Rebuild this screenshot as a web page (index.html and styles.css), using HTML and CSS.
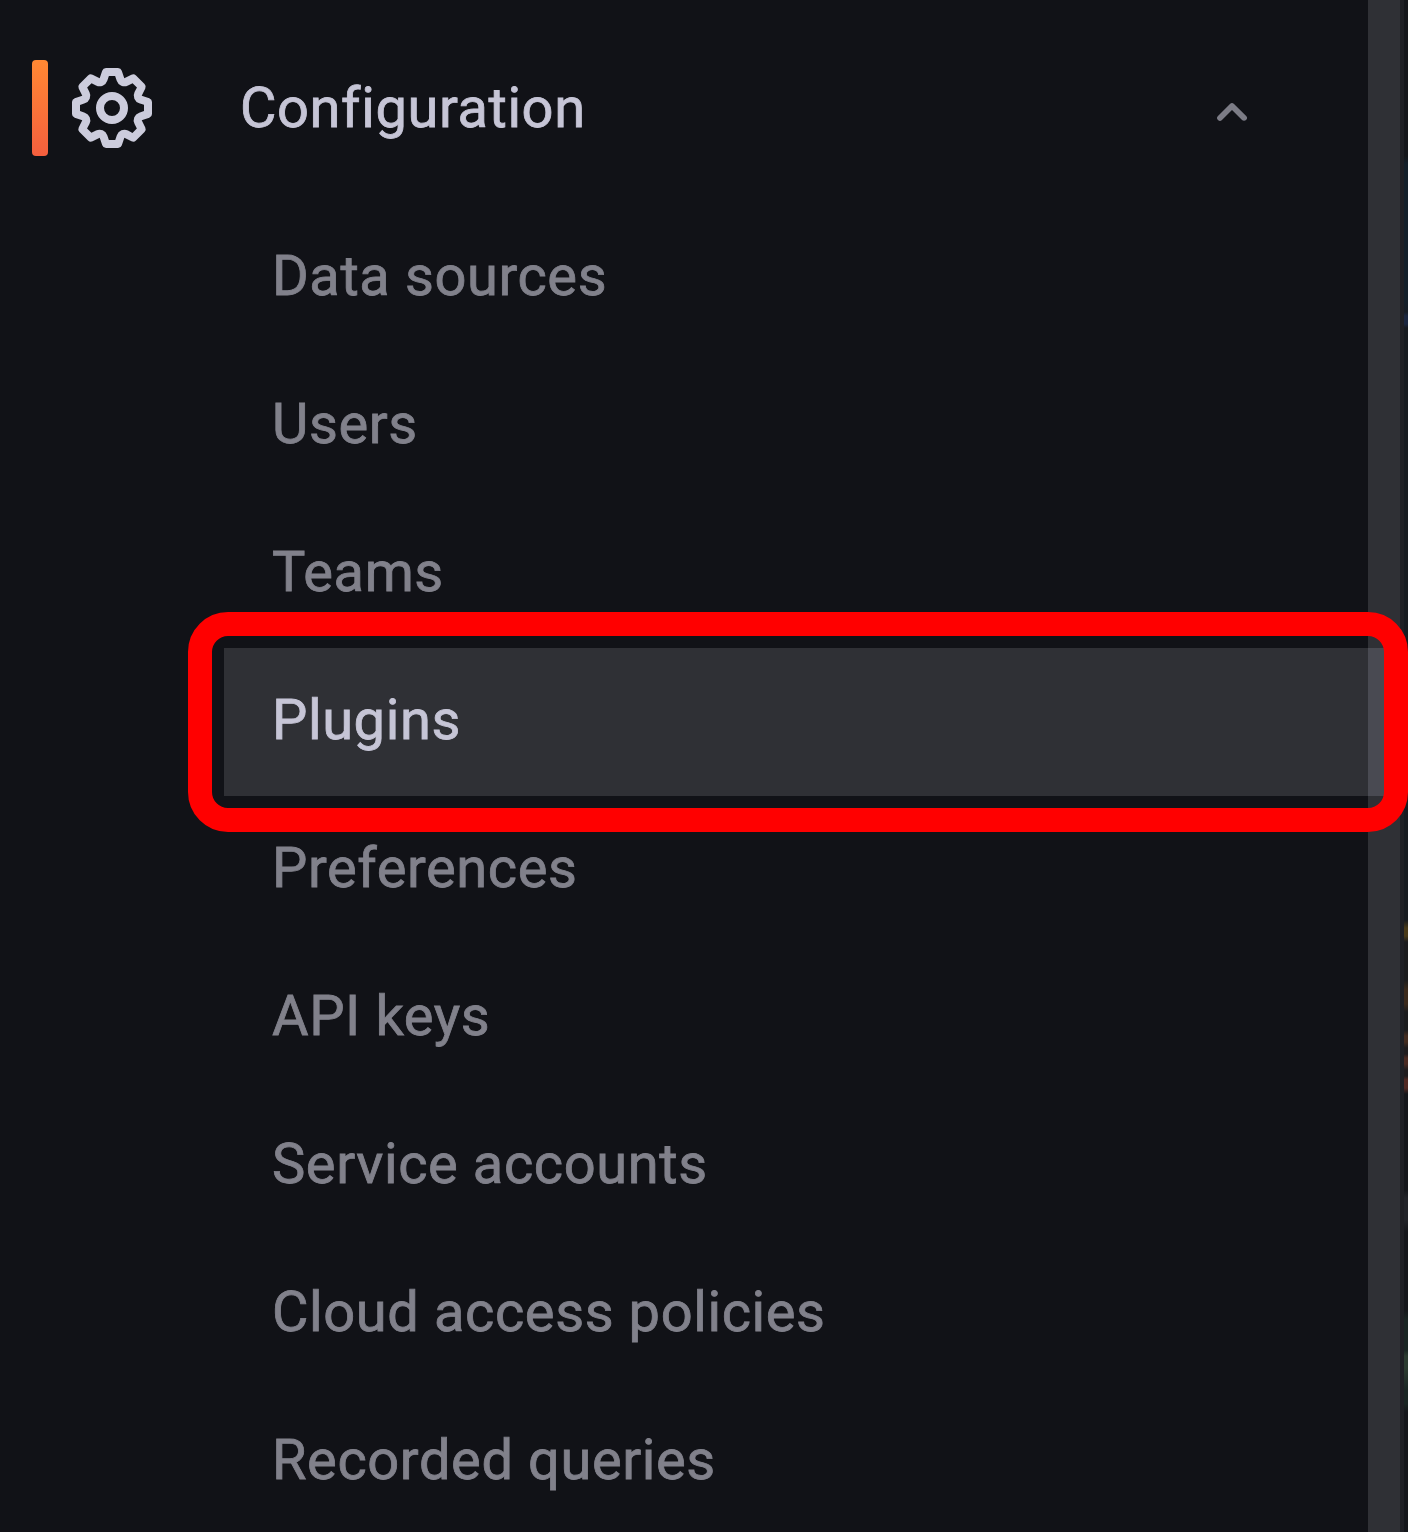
FILE: index.html
```html
<!DOCTYPE html>
<html lang="en">
<head>
<meta charset="utf-8">
<title>Configuration</title>
<link rel="stylesheet" href="styles.css">
</head>
<body>
<div class="app">
  <nav class="menu">
    <div class="menu-header">
      <span class="active-bar"></span>
      <svg class="icon-cog" viewBox="0 0 24 24" aria-hidden="true"><path d="M21.32,9.55l-1.89-.63.89-1.78A1,1,0,0,0,20.13,6L18,3.87a1,1,0,0,0-1.15-.19l-1.78.89-.63-1.89A1,1,0,0,0,13.5,2h-3a1,1,0,0,0-.95.68L8.92,4.57,7.14,3.68A1,1,0,0,0,6,3.87L3.87,6a1,1,0,0,0-.19,1.15l.89,1.78-1.89.63A1,1,0,0,0,2,10.5v3a1,1,0,0,0,.68.95l1.89.63-.89,1.78A1,1,0,0,0,3.87,18L6,20.13a1,1,0,0,0,1.15.19l1.78-.89.63,1.89a1,1,0,0,0,.95.68h3a1,1,0,0,0,.95-.68l.63-1.89,1.78.89A1,1,0,0,0,18,20.13L20.13,18a1,1,0,0,0,.19-1.15l-.89-1.78,1.89-.63A1,1,0,0,0,22,13.5v-3A1,1,0,0,0,21.32,9.55ZM20,12.78l-1.2.4A2,2,0,0,0,17.64,16l.57,1.14-1.1,1.1L16,17.64a2,2,0,0,0-2.79,1.16l-.4,1.2H11.22l-.4-1.2A2,2,0,0,0,8,17.64l-1.14.57-1.1-1.1L6.36,16A2,2,0,0,0,5.2,13.18L4,12.78V11.22l1.2-.4A2,2,0,0,0,6.36,8L5.79,6.89l1.1-1.1L8,6.36A2,2,0,0,0,10.82,5.2l.4-1.2h1.56l.4,1.2A2,2,0,0,0,16,6.36l1.14-.57,1.1,1.1L17.64,8a2,2,0,0,0,1.16,2.79l1.2.4ZM12,8a4,4,0,1,0,4,4A4,4,0,0,0,12,8Zm0,6a2,2,0,1,1,2-2A2,2,0,0,1,12,14Z"/></svg>
      <span class="menu-title">Configuration</span>
      <svg class="icon-angle" viewBox="0 0 24 24" aria-hidden="true"><path d="M17,13.41,12.71,9.17a1,1,0,0,0-1.42,0L7.05,13.41a1,1,0,0,0,0,1.42,1,1,0,0,0,1.41,0L12,11.29l3.54,3.54a1,1,0,0,0,.7.29,1,1,0,0,0,.71-.29A1,1,0,0,0,17,13.41Z"/></svg>
    </div>
    <ul class="menu-list">
      <li class="menu-item">Data sources</li>
      <li class="menu-item">Users</li>
      <li class="menu-item">Teams</li>
      <li class="menu-item selected">Plugins<span class="callout"></span></li>
      <li class="menu-item">Preferences</li>
      <li class="menu-item">API keys</li>
      <li class="menu-item">Service accounts</li>
      <li class="menu-item">Cloud access policies</li>
      <li class="menu-item">Recorded queries</li>
    </ul>
  </nav>
  <div class="divider"></div>
  <div class="divider-shade"></div>
  <div class="page-edge"></div>
</div>
</body>
</html>
```
FILE: styles.css
```css
* { box-sizing: border-box; }

body {
  margin: 0;
  background: #111217;
  font-family: Roboto, "Liberation Sans", sans-serif;
  font-size: 56px;
  line-height: 88px;
  letter-spacing: 0.6px;
  -webkit-text-stroke: 0.8px currentColor;
  color: #81818b;
}

.app {
  display: flex;
  width: 1408px;
  height: 1532px;
  overflow: hidden;
}

.menu {
  width: 1368px;
  padding-top: 12px;
}

.menu-header {
  display: flex;
  align-items: center;
  height: 192px;
  padding-left: 32px;
  color: #c6c5d6;
}

.active-bar {
  width: 16px;
  height: 96px;
  border-radius: 4px;
  background: linear-gradient(#ff8833, #f55f3e);
}

.icon-cog {
  width: 96px;
  height: 96px;
  margin: 0 80px 0 16px;
  fill: #ccccdc;
}

.menu-title { flex: 1; }

.icon-angle {
  width: 68px;
  height: 68px;
  margin: 8px 102px 0 0;
  fill: #7c7c86;
}

.menu-list {
  margin: 0 0 0 224px;
  padding: 0;
  list-style: none;
}

.menu-item {
  height: 148px;
  padding: 28px 48px;
}

.selected {
  position: relative;
  width: 1160px;
  background: linear-gradient(90deg, #2f3035 1144px, #494a52 1144px);
  color: #c6c5d6;
}

.callout {
  position: absolute;
  z-index: 1;
  left: -36px;
  top: -36px;
  width: 1220px;
  height: 220px;
  border: 24px solid #f00;
  border-radius: 40px;
}

.divider {
  width: 32px;
  background: #2f3035;
}

.divider-shade {
  width: 4px;
  background: #1f2025;
}

.page-edge {
  width: 4px;
  background: linear-gradient(
    #15171b 0 156px, #14202a 164px 300px, #171d25 312px,
    #1b2740 316px 324px, #171b20 328px 920px,
    #493a19 928px 936px, #1b1c1e 942px 980px, #3b2a1c 990px 1004px,
    #1b1c1e 1012px 1030px, #432c20 1036px 1042px, #1e1c1e 1048px 1054px,
    #4a2a22 1058px 1064px, #1e1c1e 1070px 1076px, #512923 1080px 1088px,
    #15171b 1094px 1190px, #222429 1198px 1220px, #15171b 1232px 1310px,
    #1a2624 1320px 1350px, #2c3c31 1356px 1368px, #1a2624 1390px 1404px,
    #15171b 1412px);
}
```
